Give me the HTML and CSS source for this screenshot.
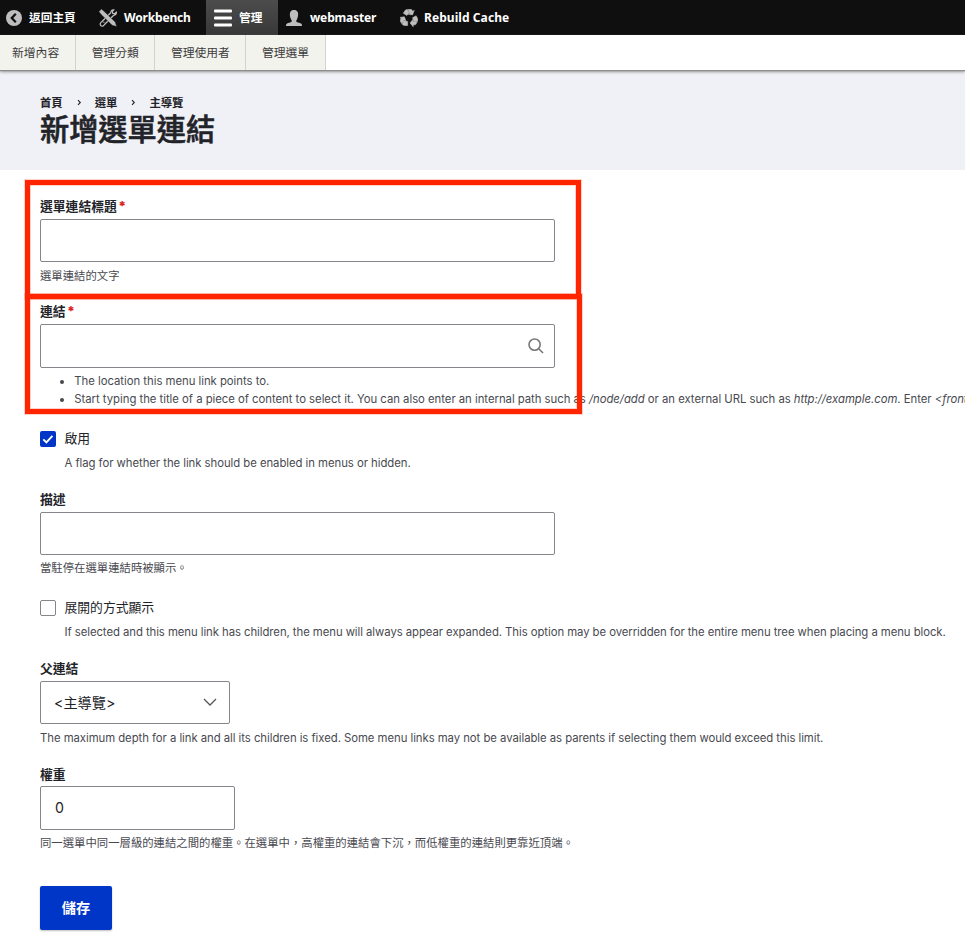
FILE: index.html
```html
<!DOCTYPE html>
<html lang="zh-Hant">
<head>
<meta charset="utf-8">
<title>新增選單連結</title>
<link rel="stylesheet" href="styles.css">
</head>
<body>
<nav class="toolbar">
  <a class="tab tab-home"><svg class="icon" viewBox="0 0 16 16"><circle cx="8" cy="8" r="8" fill="#bebebe"/><path d="M9.8 3.8 5.8 8l4 4.200" fill="none" stroke="#0f0f0f" stroke-width="2.300"/></svg><span>返回主頁</span></a>
  <a class="tab tab-workbench"><svg class="icon icon-lg" viewBox="0 0 18 18"><g fill="none" stroke="#bebebe"><path d="M2.300 13.200 12 3.500M5 16 14.700 6.300" stroke-width="1.300"/><path d="M2.300 13.200c-1.800 1.200-1.300 4 .8 4 1 0 1.600-.5 1.900-1.200M12 3.500c-.3-1.700 1-3 2.800-2.700L13.300 2.600l.5 1.800 1.800.4L17.300 3.200c.4 1.600-.9 3.200-2.600 3.100M4.500 12.800l.8.800" stroke-width="1.200"/></g><path d="M-.1 2.700 2.500.1l3 2.600L16.200 13l1.500 4.600-4.500-1.300L2.600 5.900z" fill="#bebebe" stroke="#0f0f0f" stroke-width=".4"/></svg><span>Workbench</span></a>
  <a class="tab tab-manage is-active"><svg class="icon icon-lg" viewBox="0 0 18 18"><g fill="#fff"><rect y="0.500" width="18" height="3" rx="1"/><rect y="7.500" width="18" height="3" rx="1"/><rect y="14.500" width="18" height="3" rx="1"/></g></svg><span>管理</span></a>
  <a class="tab tab-user"><svg class="icon" viewBox="0 0 16 16"><path fill="#bebebe" d="M0 16c0-2.200.8-2.700 3-3.200 1.700-.4 2.800-.8 2.800-1.800 0-.8-.6-1.200-1.100-2.600C3.900 6.500 3.500 4 4.200 2.200 4.900.6 6.300 0 8 0s3.100.6 3.800 2.200c.7 1.800.3 4.300-.5 6.200-.5 1.400-1.100 1.800-1.100 2.600 0 1 1.100 1.400 2.800 1.800 2.200.5 3 1 3 3.200z"/></svg><span>webmaster</span></a>
  <a class="tab tab-cache"><svg class="icon icon-lg" viewBox="0 0 18 18"><defs><g id="arrow"><path d="M5.200 1.300 7.200.2 9.300 3.400 6.900 6.400 3.300 4.300z"/><path d="M8 .2h3.200l1.600 2 1.500-.9-1.700 4.600-4.400-.7 1.600-1z"/></g></defs><g fill="#bebebe" stroke="#bebebe" stroke-width=".5"><use href="#arrow"/><use href="#arrow" transform="rotate(120 9 9.200)"/><use href="#arrow" transform="rotate(240 9 9.200)"/></g></svg><span>Rebuild Cache</span></a>
</nav>
<nav class="tray"><a class="tray-first">新增內容</a><a>管理分類</a><a>管理使用者</a><a>管理選單</a></nav>
<header class="page-header">
  <div class="breadcrumb"><span>首頁</span><svg viewBox="0 0 5 7"><path d="M1 1.200 3.300 3.500 1 5.800"/></svg><span>選單</span><svg viewBox="0 0 5 7"><path d="M1 1.200 3.300 3.500 1 5.800"/></svg><span>主導覽</span></div>
  <h1>新增選單連結</h1>
</header>
<main class="form">
  <div class="highlight highlight-title"></div>
  <div class="highlight highlight-link"></div>
  <section class="field field-title">
    <label class="label">選單連結標題<b class="required">*</b></label>
    <div class="input"></div>
    <p class="help">選單連結的文字</p>
  </section>
  <section class="field field-link">
    <label class="label">連結<b class="required">*</b></label>
    <div class="input input-search"><svg viewBox="0 0 16 16"><circle cx="6.600" cy="6.600" r="5.600"/><path d="m10.700 10.700 4.300 4.300"/></svg></div>
    <ul class="help-list"><li>The location this menu link points to.</li><li>Start typing the title of a piece of content to select it. You can also enter an internal path such as <em>/node/add</em> or an external URL such as <em>http://example.com</em>. Enter <em>&lt;front</em></li></ul>
  </section>
  <section class="field field-enabled">
    <div class="check-row"><span class="checkbox is-checked"><svg viewBox="0 0 16 16"><path d="m3.300 8.300 3.100 3.100 6-6.600"/></svg></span><label>啟用</label></div>
    <p class="help help-latin help-indent">A flag for whether the link should be enabled in menus or hidden.</p>
  </section>
  <section class="field field-desc">
    <label class="label">描述</label>
    <div class="input"></div>
    <p class="help">當駐停在選單連結時被顯示。</p>
  </section>
  <section class="field field-expanded">
    <div class="check-row"><span class="checkbox"></span><label>展開的方式顯示</label></div>
    <p class="help help-latin help-indent">If selected and this menu link has children, the menu will always appear expanded. This option may be overridden for the entire menu tree when placing a menu block.</p>
  </section>
  <section class="field field-parent">
    <label class="label">父連結</label>
    <div class="input input-select"><span>&lt;主導覽&gt;</span><svg viewBox="0 0 14 8"><path d="m1 1 6 6 6-6"/></svg></div>
    <p class="help help-latin">The maximum depth for a link and all its children is fixed. Some menu links may not be available as parents if selecting them would exceed this limit.</p>
  </section>
  <section class="field field-weight">
    <label class="label">權重</label>
    <div class="input input-number">0</div>
    <p class="help">同一選單中同一層級的連結之間的權重。在選單中，高權重的連結會下沉，而低權重的連結則更靠近頂端。</p>
  </section>
  <button class="save" type="button">儲存</button>
</main>
</body>
</html>
```
FILE: styles.css
```css
* { box-sizing: border-box; }
body { margin: 0; height: 946px; overflow: hidden; background: #fff; color: #222328; font-family: Inter, "Noto Sans CJK TC", sans-serif; white-space: nowrap; }
p, h1, ul { margin: 0; padding: 0; }
svg { display: block; flex: none; }

.toolbar { display: flex; height: 35px; background: #0f0f0f; color: #fff; font: bold 12px/35px "Noto Sans", "Noto Sans CJK TC", sans-serif; }
.tab { display: flex; align-items: center; gap: 7px; height: 35px; }
.icon { width: 16px; height: 16px; }
.icon-lg { width: 18px; height: 18px; }
.tab-home { width: 99px; padding-left: 6px; font-size: 11.7px; }
.tab-workbench { width: 107px; letter-spacing: -.17px; }
.tab-manage { width: 72px; padding-left: 8px; font-size: 11.7px; }
.is-active { background: linear-gradient(#4c4c4c, #383838); }
.tab-user { width: 122px; padding-left: 8px; }
.tab-user span { margin-left: 1px; letter-spacing: -.15px; }
.tab-cache { gap: 6px; letter-spacing: .07px; }

.tray { position: relative; display: flex; height: 35px; background: #fff; box-shadow: 0 1px 1px #8d8d8d, 0 2px 3px #999; color: #3c3c3c; font: 11.8px/35px "Noto Sans", "Noto Sans CJK TC", sans-serif; }
.tray a { padding: 0 15.500px; background: #f3f3ee; border-right: 1px solid #d2d2d2; }
.tray .tray-first { padding-left: 12px; padding-right: 16px; }

.page-header { height: 100px; padding: 22px 40px 0; background: #f0f1f6; }
.breadcrumb { display: flex; align-items: center; height: 19px; font-size: 11.350px; font-weight: 700; }
.breadcrumb svg { width: 5px; height: 7px; margin: 1px 13px 0 14px; fill: none; stroke: #222328; stroke-width: 1.100; }
h1 { padding-top: 1px; font-size: 29.200px; line-height: 36px; font-weight: 500; -webkit-text-stroke: .6px #222328; }

.form { position: relative; height: 776px; padding: 27px 0 0 40px; }
.highlight { position: absolute; z-index: 1; left: 25px; border: 5px solid #ff2500; box-shadow: 0 0 0 1px rgba(255, 37, 0, .2), inset 0 0 0 1px rgba(255, 37, 0, .2); }
.highlight-title { top: 10px; width: 556px; height: 119px; }
.highlight-link { top: 124px; width: 557px; height: 120px; }
.label { display: flex; height: 22px; font-size: 12.800px; line-height: 19px; font-weight: 700; }
.required { margin-left: 1.500px; color: #dc2323; font-size: 13px; }
.input { width: 515px; height: 43px; border: 1px solid #85868c; border-radius: 2px; background: #fff; font-size: 14.200px; line-height: 41px; }
.help { margin-top: 5px; color: #484950; font-size: 11.370px; line-height: 18px; }
.help-latin { font-size: 11.350px; letter-spacing: -.052px; }
.field-title { height: 105px; }
.field-link { height: 127px; }
.field-enabled { height: 61px; }
.field-desc { height: 108px; }
.field-desc .help { margin-top: 4px; }
.field-expanded { height: 61px; }
.field-expanded .help { letter-spacing: -.065px; }
.field-parent { height: 106px; }
.field-weight { height: 121px; }
.field-weight .label { height: 21px; }
.field-weight .help { margin-top: 4px; }
.input-search { display: flex; height: 44px; align-items: center; justify-content: flex-end; padding-right: 10px; }
.input-search svg { width: 16px; height: 16px; fill: none; stroke: #777; stroke-width: 1.600; }
.help-list { padding: 4px 0 0 34.300px; color: #484950; font-size: 11.350px; line-height: 18px; letter-spacing: -.035px; }
.check-row { display: flex; align-items: center; gap: 8.500px; height: 20px; font-size: 12.800px; }
.check-row label { line-height: 18px; }
.checkbox { width: 16px; height: 16px; border: 1px solid #85868c; border-radius: 2px; }
.checkbox.is-checked { border: 0; background: #0036c8; }
.checkbox svg { width: 16px; height: 16px; fill: none; stroke: #fff; stroke-width: 1.900; }
.help-indent { padding-left: 24.500px; }
.input-select { display: flex; align-items: center; justify-content: space-between; width: 190px; padding: 0 12px 0 13px; }
.input-select svg { width: 14px; height: 8px; margin-top: -2px; fill: none; stroke: #55565b; stroke-width: 1.300; }
.input-number { width: 195px; height: 44px; padding-left: 14px; }
.save { display: block; width: 72px; height: 44px; padding: 0; border: 0; border-radius: 2px; background: #0036c8; box-shadow: 0 1px 2px rgba(0, 0, 0, .25); color: #fff; font: bold 14.200px/44px Inter, "Noto Sans CJK TC", sans-serif; }
```
